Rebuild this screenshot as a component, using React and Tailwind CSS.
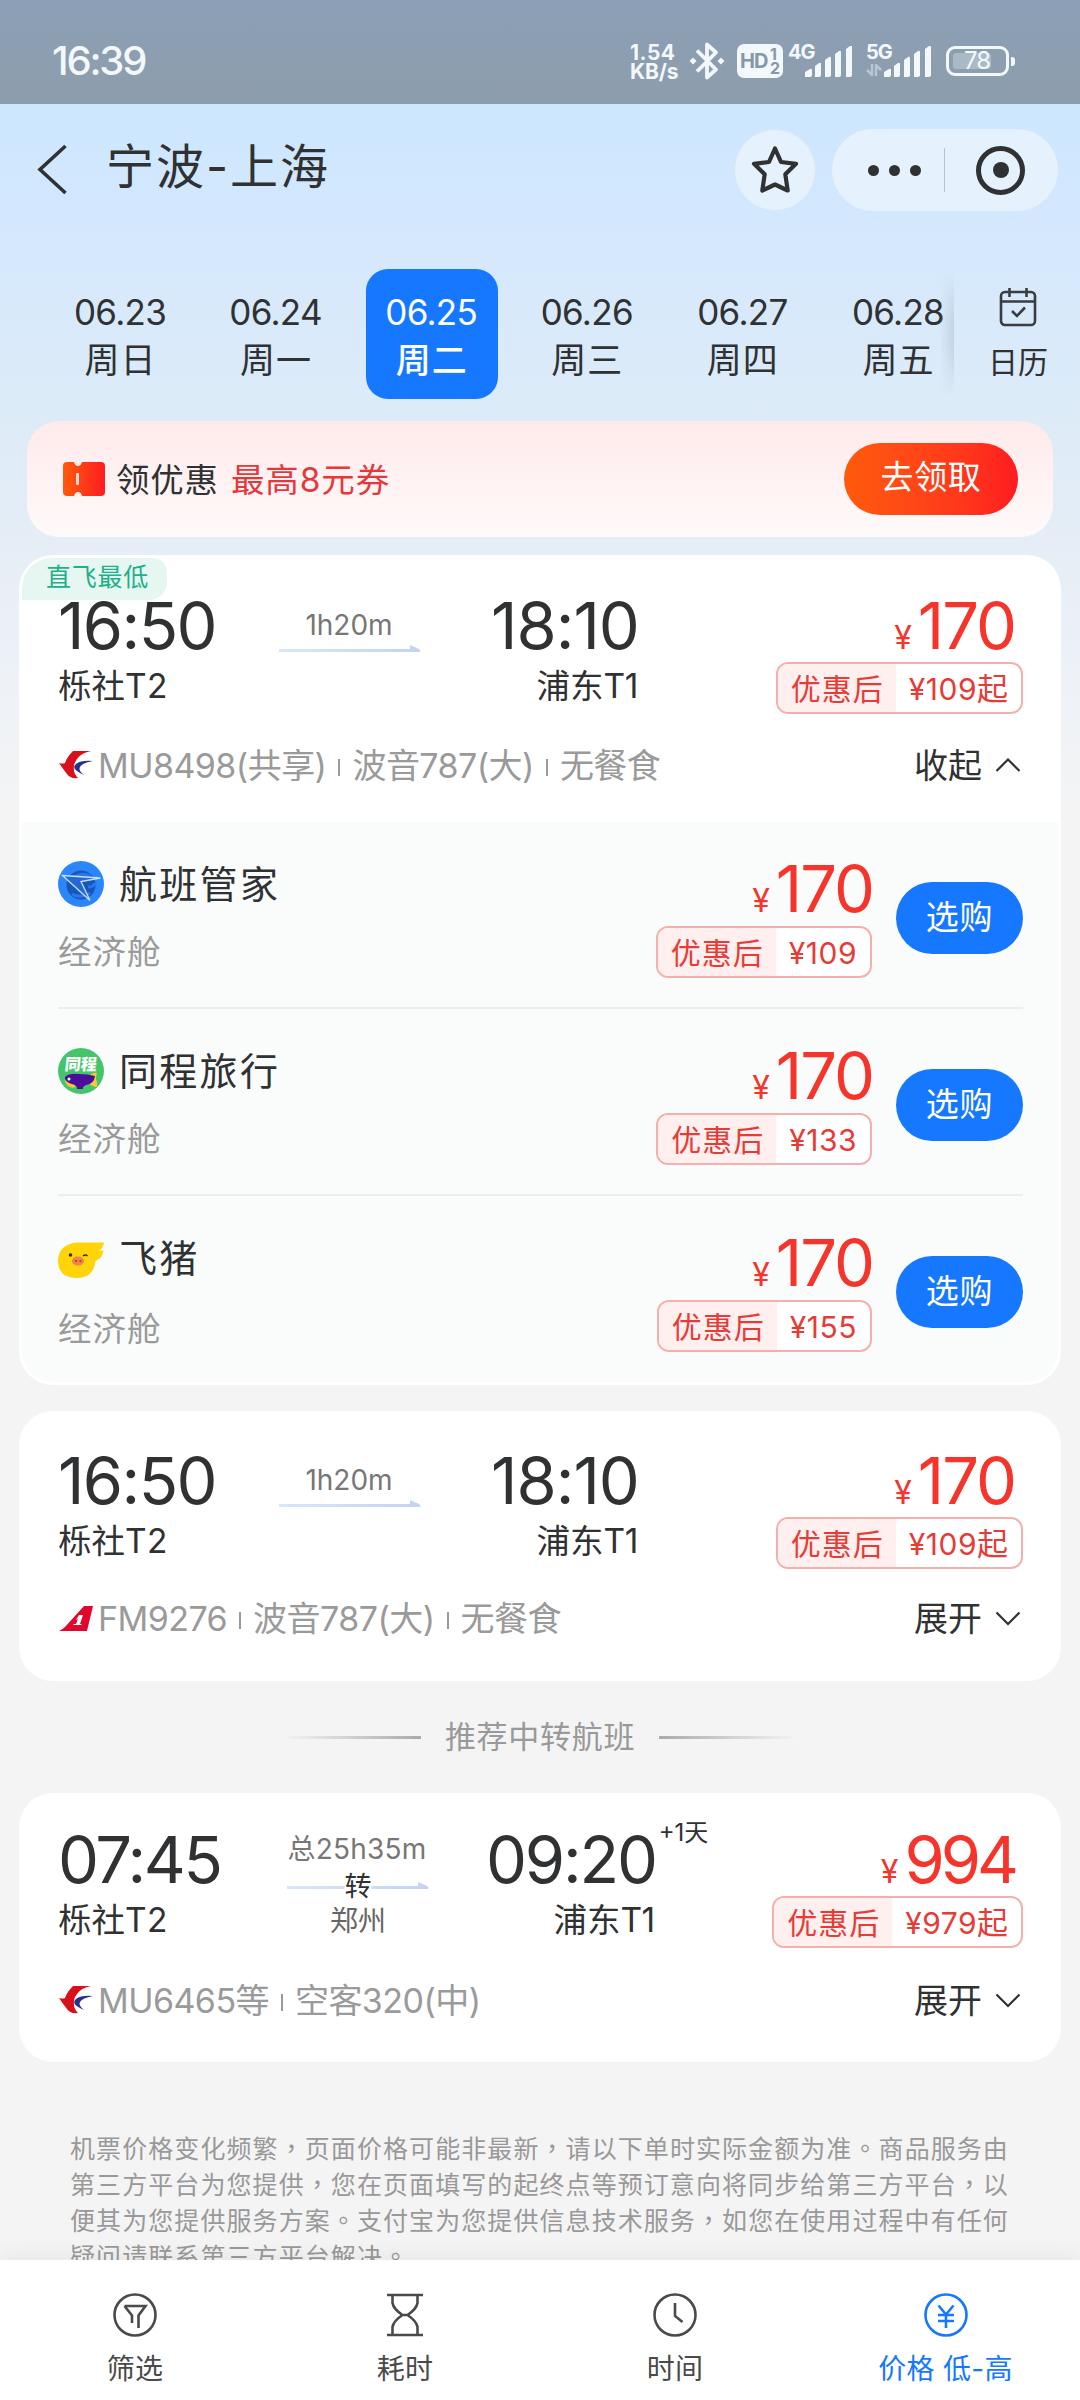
import React from "react";

const FONT = "font-[Inter,'Noto_Sans_CJK_SC',sans-serif]";

function SignalBars() {
  return (
    <svg width="50" height="32" viewBox="0 0 50 32" fill="#f3f8fc">
      <path d="M1 31V26l5-3q2-1 2 1v5q0 2-2 2z" />
      <path d="M11 31V20l4-3q2-1 2 1v11q0 2-2 2z" />
      <path d="M21 31V14l4-3q2-1 2 1v17q0 2-2 2z" />
      <path d="M31 31V8l4-3q2-1 2 1v23q0 2-2 2z" />
      <path d="M42 31V3l4-3q2-1 2 1v28q0 2-2 2z" />
    </svg>
  );
}

function StatusBar() {
  return (
    <div className="flex h-[104px] shrink-0 items-start bg-linear-to-b from-[#8c9fb6] to-[#8d9dac] pl-[52px] text-[#f3f8fc]">
      <div className="mt-[41px] w-[578px] text-[40px] leading-[40px] font-medium tracking-[-2.200px]">16:39</div>
      <div className="mt-[43px] w-[58px] text-[21px] leading-[19px] font-bold">
        <div className="tracking-[0.500px]">1.54</div>
        <div className="tracking-[-0.100px]">KB/s</div>
      </div>
      <svg className="mt-[41px]" width="40" height="40" viewBox="0 0 40 40" fill="none" stroke="#f3f8fc" strokeWidth="3.800" strokeLinejoin="round">
        <path d="M9 9.500L28 28.500 19 36.500V3.500L28 11.500 9 30.500" />
        <path d="M5 16.500l3.500 3.500-3.500 3.500L1.500 20zM33 16.500l3.500 3.500-3.500 3.500-3.500-3.500z" fill="#f3f8fc" stroke="none" />
      </svg>
      <div className="mt-[44px] ml-[9px] flex h-[34px] w-[46px] items-center rounded-[7px] bg-[#f3f8fc] pl-[3px] text-[#8597a8]">
        <span className="w-[30px] text-[20px] font-bold tracking-[-1px]">HD</span>
        <span className="flex flex-col text-[16px] leading-[14px] font-bold">
          <span>1</span>
          <span>2</span>
        </span>
      </div>
      <div className="ml-[5px] flex">
        <span className="mt-[42px] w-[16px] text-[20px] leading-[20px] font-bold tracking-[-1px]">4G</span>
        <div className="mt-[46px]"><SignalBars /></div>
      </div>
      <div className="ml-[12px] flex">
        <div className="mt-[42px] flex w-[17px] flex-col">
          <span className="text-[20px] leading-[20px] font-bold tracking-[-1px]">5G</span>
          <svg className="mt-[2px]" width="16" height="12" viewBox="0 0 16 12" fill="none" stroke="#b9c7d3" strokeWidth="2.500">
            <path d="M6 0v11L1 6M10 12V1l5 5" />
          </svg>
        </div>
        <div className="mt-[46px]"><SignalBars /></div>
      </div>
      <div className="mt-[46px] ml-[13px] flex items-center">
        <div className="h-[30px] w-[63px] rounded-[9px] border-3 border-[#f3f8fc] p-[4px]">
          <div className="flex h-full w-[38px] items-center rounded-[3px] bg-[#aab9c6] pl-[11px] text-[24px] tracking-[-1px]">
            <span>78</span>
          </div>
        </div>
        <div className="ml-[2px] h-[9px] w-[4px] rounded-r-[3px] bg-[#f3f8fc]" />
      </div>
    </div>
  );
}

function Header() {
  return (
    <div className="flex h-[157px] items-start pl-[36px] pt-[25px]">
      <svg className="mt-[14px]" width="32" height="54" viewBox="0 0 32 54" fill="none" stroke="#2f3133" strokeWidth="3.600">
        <path d="M29.500 3L4 26.500 29.500 50" />
      </svg>
      <h1 className="ml-[38px] mt-[10px] w-[628px] text-[48px] leading-[56px] text-[#2f3133]">
        <span className="tracking-[2px]">宁波</span>
        <span className="tracking-[2px]">-</span>
        <span className="tracking-[2px]">上海</span>
      </h1>
      <div className="flex h-[82px] w-[82px] items-center justify-center rounded-full border border-[#d9e8f6] bg-[#e5f1fd]">
        <svg width="48" height="50" viewBox="0 0 48 50" fill="none" stroke="#2f3133" strokeWidth="4.200" strokeLinejoin="round">
          <path d="M24 3.500l6 13.500 15 1.800-10.700 10.500 2.400 16.200L24 39.500 11.300 45.500l2.400-16.200L3 18.800 18 17z" />
        </svg>
      </div>
      <div className="ml-[16px] flex h-[82px] w-[226px] items-center rounded-full bg-[#e5f1fd]">
        <div className="flex gap-[10px] pl-[36px]">
          <i className="h-[11px] w-[11px] rounded-full bg-[#2f3133]" />
          <i className="h-[11px] w-[11px] rounded-full bg-[#2f3133]" />
          <i className="h-[11px] w-[11px] rounded-full bg-[#2f3133]" />
        </div>
        <div className="ml-[23px] h-[44px] w-px bg-[#b3c3d2]" />
        <div className="ml-[31px] flex h-[49px] w-[49px] items-center justify-center rounded-full border-[5.500px] border-[#2f3133]">
          <i className="h-[16px] w-[16px] rounded-full bg-[#2f3133]" />
        </div>
      </div>
    </div>
  );
}

const DATES = [
  ["06.23", "周日"],
  ["06.24", "周一"],
  ["06.25", "周二"],
  ["06.26", "周三"],
  ["06.27", "周四"],
  ["06.28", "周五"],
];

function DateTabs() {
  return (
    <div className="flex h-[160px] items-start pl-[55px] text-[#2f3133]">
      <div className="flex w-[899px] gap-[23.600px]">
        {DATES.map(([d, w]) => (
          <div
            key={d}
            className={
              "mt-[8px] flex h-[130px] w-[132px] shrink-0 flex-col items-center rounded-[22px] pt-[21px] " +
              (d === "06.25" ? "bg-[#1677ff] font-medium text-white" : "")
            }
          >
            <div className="mr-[2px] text-[35px] leading-[44px] font-normal tracking-[-0.700px]">{d}</div>
            <div className="mr-px mt-[3px] text-[35px] leading-[46px] tracking-[1px]">{w}</div>
          </div>
        ))}
      </div>
      <div className="-ml-[14px] mt-[10px] h-[124px] w-[14px] bg-linear-to-r from-transparent to-[#b9cadb]/70 mask-y-from-60% mask-y-to-100%" />
      <div className="flex w-[126px] flex-col items-center pl-[2px] pt-[25px]">
        <svg width="38" height="42" viewBox="0 0 38 42" fill="none" stroke="#3a3d40" strokeWidth="2.600">
          <rect x="2" y="6" width="34" height="33" rx="4" />
          <path d="M2 15.500h34M10.500 2v9M27.500 2v9M13 25l5 5 8-8.500" />
        </svg>
        <div className="mt-[12px] text-[30px] leading-[44px]">日历</div>
      </div>
    </div>
  );
}

function Coupon() {
  return (
    <div className="mx-[27px] flex h-[116px] items-center rounded-[32px] bg-linear-to-b from-[#ffeaeb] to-[#fffafa] pl-[36px] pr-[35px]">
      <svg width="42" height="36" viewBox="0 0 42 36">
        <defs>
          <linearGradient id="ticket">
            <stop offset="0" stopColor="#ff5b0c" />
            <stop offset="1" stopColor="#ff1c20" />
          </linearGradient>
        </defs>
        <path fill="url(#ticket)" d="M4 1h7q1 4 4 4t4-4h19q4 0 4 4v26q0 4-4 4H19q-1-4-4-4t-4 4H4q-4 0-4-4V5q0-4 4-4z" />
        <rect x="13" y="12" width="3" height="12" rx="1" fill="#ffd9d0" />
      </svg>
      <div className="ml-[11px] mt-[3px] text-[33.500px] tracking-[0.800px] text-[#2f3133]">领优惠</div>
      <div className="ml-[12px] mt-[3px] text-[33.500px] tracking-[0.900px] text-[#e4393c]">最高8元券</div>
      <button className="ml-auto h-[72px] w-[174px] rounded-full bg-linear-to-r from-[#ff5a0b] to-[#ff1a20] pb-[3px] text-[33px] tracking-[0.700px] text-white">
        去领取
      </button>
    </div>
  );
}

function Arrow() {
  return (
    <svg width="142" height="8" viewBox="0 0 142 8">
      <defs>
        <linearGradient id="route">
          <stop offset="0" stopColor="#dbe6f7" />
          <stop offset="1" stopColor="#c3d3f0" />
        </linearGradient>
      </defs>
      <path fill="url(#route)" d="M0 4h131V0l9 4q3 3 0 3H0z" />
    </svg>
  );
}

function Discount({ amount, plain }) {
  return (
    <div className="flex h-[52px] items-stretch overflow-hidden rounded-[12px] border-2 border-[#f3b0ad] bg-white text-[30px] leading-[50px] text-[#e63c37]">
      <div className="bg-[#fff0ef] pl-[13px] pr-[12px] tracking-[1px]">优惠后</div>
      <div className="flex pl-[13px] pr-[13px]">
        <span className="text-[30px] tracking-[0.500px]">{amount}</span>
        {plain ? null : <span className="text-[31px]">起</span>}
      </div>
    </div>
  );
}

function Price({ value }) {
  return (
    <div className="flex items-baseline text-[#f5352c]">
      <span className="mr-[6px] text-[32px]">¥</span>
      <span className={"text-[65px] leading-[60px] " + (value === "170" ? "tracking-[-2px]" : "tracking-[-4px]")}>{value}</span>
    </div>
  );
}

function EasternLogo() {
  return (
    <svg width="34" height="30" viewBox="0 0 34 30">
      <path fill="#d7101c" d="M14 1h18q-10 2-14 8-4 5-3 11 0 4 4 8-8 1-11-4-4-5-8-11 4 1 6 0 2-6 8-12z" />
      <path fill="#27308c" d="M34 11q-12-1-17 3-6 5 8 11-6-5-4-8 2-4 13-6z" />
    </svg>
  );
}

function ShanghaiLogo() {
  return (
    <svg width="34" height="27" viewBox="0 0 34 27">
      <path fill="#e1062c" d="M25 1h9l-6 25H0q4-2 6-4z" />
      <path fill="#fff" d="M20 10h4l-3 9h2l-1 1H14l1-1h2l2-5-2 1z" />
    </svg>
  );
}

function FlightInfo({ logo, parts, open, className }) {
  return (
    <div className={"flex h-[44px] items-center pl-[38px] text-[34px] " + className}>
      {logo}
      <div className="flex items-center pl-[5px] text-[#9a9a9a]">
        {parts.map((p, i) => (
          <React.Fragment key={i}>
            {i > 0 && <i className="ml-[12px] mr-[12px] mt-[4px] h-[17px] w-[2px] bg-[#9a9a9a]" />}
            <span className="tracking-[-0.550px]">{p}</span>
          </React.Fragment>
        ))}
      </div>
      <div className="ml-auto text-[34px] text-[#2f3133]">{open ? "收起" : "展开"}</div>
      <svg className="ml-[13px] mr-[38px]" width="26" height="16" viewBox="0 0 26 16" fill="none" stroke="#2f3133" strokeWidth="2.200">
        <path d={open ? "M1.500 14L13 2.500 24.500 14" : "M1.500 2.500L13 14 24.500 2.500"} />
      </svg>
    </div>
  );
}

function Times({ dep, arr, dur, via, nextDay, price, discount }) {
  return (
    <div className="flex h-[116px] items-start pl-[37px] text-[#2f3133]">
      <div className={via ? "w-[229px]" : "w-[221px]"}>
        <div className={"text-[65px] leading-[60px] " + (via ? "tracking-[-2.400px]" : "tracking-[-1.600px]")}>{dep}</div>
        <div className="mt-[8px] text-[33.500px] leading-[44px]">
          栎社<span className="tracking-[0.500px]">T2</span>
        </div>
      </div>
      <div className="flex w-[142px] flex-col items-center">
        <div className={"mr-[2px] whitespace-nowrap text-[28px] leading-[40px] text-[#777] " + (via ? "-mt-[1px] tracking-[0.200px]" : "mt-[9px]")}>{dur}</div>
        {via ? (
          <div className="relative mt-[13px] h-[8px]">
            <Arrow />
            <span className="absolute -top-[12px] left-1/2 -translate-x-1/2 bg-white text-[27px] leading-[34px]">转</span>
          </div>
        ) : (
          <div className="h-[8px]">
            <Arrow />
          </div>
        )}
        {via && <div className="mt-[13px] text-[28px] leading-[36px] text-[#666]">{via}</div>}
      </div>
      <div className={"flex items-start " + (nextDay ? "ml-[57px]" : "ml-[70px]")}>
        <div className="flex flex-col items-end">
          <div className={"text-[65px] leading-[60px] " + (nextDay ? "tracking-[-2.200px]" : "tracking-[-1px]")}>{arr}</div>
          <div className="mr-px mt-[8px] text-[33.500px] leading-[44px]">
            浦东<span className="tracking-[-0.500px]">T1</span>
          </div>
        </div>
        {nextDay && <div className="-mt-[13px] ml-[3px] text-[24px] leading-[32px]">{nextDay}</div>}
      </div>
      <div className="ml-auto mr-[36px] flex flex-col items-end">
        <div className="mr-[8px] flex h-[60px] items-center pt-[5px]"><Price value={price} /></div>
        <div className="mt-[6px]"><Discount amount={discount} /></div>
      </div>
    </div>
  );
}

function GuanjiaLogo() {
  return (
    <svg width="46" height="46" viewBox="0 0 46 46">
      <circle cx="23" cy="23" r="23" fill="#2c86fb" />
      <circle cx="23" cy="24" r="14.500" fill="#1558bd" />
      <path d="M13 20a14 14 0 0 1 20-4M14 33q8 5 18-1M30 26q6 0 7-4" stroke="#2a77e6" strokeWidth="3" fill="none" />
      <path d="M4.500 14.500l38 2.500-19.500 3.500L32 39.500z" fill="#2369d6" stroke="#c8defb" strokeWidth="1.300" />
    </svg>
  );
}

function TongchengLogo() {
  return (
    <div className="relative h-[46px] w-[46px] overflow-hidden rounded-full bg-[#45c56b]">
      <svg width="46" height="46" viewBox="0 0 46 46">
        <path fill="#f6c933" d="M32 27q4-3 7-2-1 3-1 6 2 4 1 8-5 0-8-4z" />
        <path fill="#f6c933" d="M7 31q0 7 8 9l5-3z" />
        <path fill="#4b0c9c" d="M7 29q4-4 14-3 9 0 16 2-1 8-9 9l-3 2v2h-6v-2q-3-3-5-3-5-1-7-5z" />
        <circle cx="11" cy="31" r="1.500" fill="#fff" />
      </svg>
      <span className="absolute left-0 top-[7px] w-full -skew-x-6 text-center text-[16px] leading-[18px] font-black text-white">同程</span>
    </div>
  );
}

function FliggyLogo() {
  return (
    <svg width="46" height="46" viewBox="0 0 46 46">
      <path fill="#ffd40a" d="M19 6.500h27q-1 6-5 8l4.500 0q-1 8-8 10.500-2 17-18.500 17Q0 42 0 24 1 8 19 6.500z" />
      <circle cx="12.500" cy="19" r="1.800" fill="#3a2a12" />
      <path d="M25 20q2.500-2 4.500 0" stroke="#3a2a12" strokeWidth="1.600" fill="none" />
      <ellipse cx="20" cy="25" rx="6" ry="4.500" fill="#f0854c" />
      <circle cx="18" cy="25" r="1.200" fill="#c04a2c" />
      <circle cx="22.500" cy="25" r="1.200" fill="#c04a2c" />
    </svg>
  );
}

function Offer({ logo, name, amount, last }) {
  return (
    <div className={"ml-[36px] mr-[35px] flex h-[187px] items-start " + (last ? "" : "border-b-2 border-[#eceeee]")}>
      <div className="pt-[37px]">
        <div className={"flex h-[50px] items-center " + (last ? "pt-px" : "")}>
          {logo}
          <div className="ml-[15px] text-[38px] tracking-[2.300px] text-[#2f3133]">{name}</div>
        </div>
        <div className={(last ? "mt-[24px]" : "mt-[21px]") + " text-[33.500px] leading-[44px] tracking-[1px] text-[#9a9a9a]"}>经济舱</div>
      </div>
      <div className="ml-auto flex flex-col items-end pt-[37px]">
        <div className="-mr-px flex h-[60px] items-center pt-[5px]"><Price value="170" /></div>
        <div className="mt-[7px]"><Discount amount={amount} plain /></div>
      </div>
      <button className="ml-[24px] mt-[60px] h-[72px] w-[127px] rounded-full bg-[#1677ff] pb-[1px] text-[33px] tracking-[0.800px] text-white">选购</button>
    </div>
  );
}

const NOTICE = [
  "机票价格变化频繁，页面价格可能非最新，请以下单时实际金额为准。商品服务由",
  "第三方平台为您提供，您在页面填写的起终点等预订意向将同步给第三方平台，以",
  "便其为您提供服务方案。支付宝为您提供信息技术服务，如您在使用过程中有任何",
  "疑问请联系第三方平台解决。",
];

function Notice() {
  return (
    <div className="ml-[70px] mt-[67px] h-[160px] whitespace-nowrap text-[25px] leading-[36px] tracking-[1.080px] text-[#999]">
      {NOTICE.map((line) => (
        <div key={line} className="h-[36px]">
          {line.split(/([，。])/).map((s, i) =>
            /^[，。]$/.test(s) ? (
              <span key={i} lang="zh-TW" className="font-['Noto_Sans_CJK_TC']">{s}</span>
            ) : (
              <span key={i}>{s}</span>
            )
          )}
        </div>
      ))}
    </div>
  );
}

const TABS = [
  ["筛选", <><circle cx="23" cy="23" r="20.500" /><path d="M12.500 14h21l-7 9.500V36M12.500 14L20 23.500V31" /></>],
  ["耗时", <><path d="M5 3h36M5 43h36M10.500 3v8q1 6 10 12-9 6-10 12v8M35.500 3v8q-1 6-10 12 9 6 10 12v8M18 23h10" /></>],
  ["时间", <><circle cx="23" cy="23" r="20.500" /><path d="M23 11v13l7.500 6" /></>],
  ["价格 低-高", <><circle cx="23" cy="23" r="20.500" /><path d="M15.500 13.500L23 22.500l7.500-9M23 22.500V36M15 23h16M15 29h16" /></>],
];

function BottomBar() {
  return (
    <div className="relative flex h-[140px] shrink-0 bg-white shadow-[0_-4px_20px_rgba(0,0,0,0.060)]">
      {TABS.map(([label, icon], i) => (
        <div key={label} className={"flex w-[270px] flex-col items-center pt-[32px] " + (i === 3 ? "pl-px text-[#1677ff]" : "text-[#4a4a4a]")}>
          <svg width="46" height="46" viewBox="0 0 46 46" fill="none" stroke="currentColor" strokeWidth="2.600">{icon}</svg>
          <div className="mt-[13px] text-[28px] leading-[36px] tracking-[0.300px]">{label}</div>
        </div>
      ))}
    </div>
  );
}

export default function App() {
  return (
    <div className={"flex h-[2400px] w-[1080px] flex-col overflow-hidden bg-[#f4f4f4] " + FONT}>
      <StatusBar />
      <div className="h-[2156px] shrink-0 bg-[linear-gradient(#cce7ff_0px,#d5e8fd_136px,#dcebf8_296px,#e6eef6_456px,#eef2f7_580px,#f4f4f4_720px)]">
        <Header />
        <DateTabs />
        <Coupon />

        <div className="mx-[19px] mt-[18px] h-[830px] rounded-[34px] bg-white p-[3px]">
          <div className="flex h-[264px] flex-col">
            <div className="flex h-[42px] w-[145px] items-center justify-center rounded-tl-[30px] rounded-tr-[14px] rounded-br-[18px] bg-[#e6f7f2] pb-[3px] pl-[6px] text-[25px] tracking-[0.700px] text-[#1fb08a]">
              直飞最低
            </div>
            <div className="-mx-[1px] -mt-[4px]">
              <Times dep="16:50" arr="18:10" dur="1h20m" price="170" discount="¥109" />
              <FlightInfo className="mt-[31px]" logo={<EasternLogo />} parts={["MU8498(共享)", "波音787(大)", "无餐食"]} open />
            </div>
          </div>
          <div className="h-[560px] rounded-b-[31px] bg-[#fafcfc]">
            <Offer logo={<GuanjiaLogo />} name="航班管家" amount="¥109" />
            <Offer logo={<TongchengLogo />} name="同程旅行" amount="¥133" />
            <Offer logo={<FliggyLogo />} name="飞猪" amount="¥155" last />
          </div>
        </div>

        <div className="mx-[19px] mt-[26px] h-[270px] rounded-[34px] bg-white px-[2px] pt-[40px]">
          <Times dep="16:50" arr="18:10" dur="1h20m" price="170" discount="¥109" />
          <FlightInfo className="mt-[29px]" logo={<ShanghaiLogo />} parts={["FM9276", "波音787(大)", "无餐食"]} />
        </div>

        <div className="flex h-[112px] items-center justify-center gap-[24px] text-[31px] tracking-[0.700px] text-[#999]">
          <i className="h-[3px] w-[138px] bg-linear-to-l from-[#aaa] to-transparent" />
          推荐中转航班
          <i className="h-[3px] w-[138px] bg-linear-to-r from-[#aaa] to-transparent" />
        </div>

        <div className="mx-[19px] h-[269px] rounded-[34px] bg-white px-[2px] pt-[37px]">
          <Times dep="07:45" arr="09:20" dur="总25h35m" via="郑州" nextDay="+1天" price="994" discount="¥979" />
          <FlightInfo className="mt-[32px]" logo={<EasternLogo />} parts={["MU6465等", "空客320(中)"]} />
        </div>

        <Notice />
      </div>
      <BottomBar />
    </div>
  );
}
